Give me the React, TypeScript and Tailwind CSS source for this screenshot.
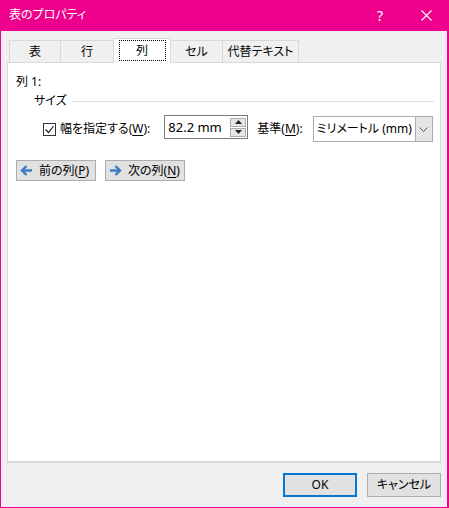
import React from "react";

const font = "font-['Noto_Sans','Noto_Sans_CJK_JP',sans-serif] [font-feature-settings:'palt']";

function Tab({ label, w, selected, last }: { label: string; w: string; selected?: boolean; last?: boolean }) {
  if (selected) {
    return (
      <div className={`${w} h-[25px] -mb-px relative z-10 bg-white border border-b-0 border-[#d9d9d9] flex items-start justify-center pt-[1px]`}>
        <div className="w-[47px] h-[21px] border border-dotted border-black flex items-center justify-center text-[12px] text-black">
          {label}
        </div>
      </div>
    );
  }
  return (
    <div
      className={`${w} h-[22px] border-t border-[#d9d9d9] ${last ? "border-l border-r" : "border-l"} flex items-center justify-center text-[12px] text-black`}
    >
      {label}
    </div>
  );
}

function U({ children }: { children: React.ReactNode }) {
  return <span className="underline underline-offset-2">{children}</span>;
}

function Arrow({ dir }: { dir: "left" | "right" }) {
  return (
    <svg width="13" height="11" viewBox="0 0 13 11" className={dir === "right" ? "" : "-scale-x-100"}>
      <path d="M1 5.5h10M6.5 1l4.5 4.5-4.5 4.5" stroke="#3b7cc4" strokeWidth="2.4" fill="none" />
    </svg>
  );
}

export default function App() {
  return (
    <div className={`w-[449px] h-[508px] bg-[#ec008c] pl-px pr-[2px] pb-px flex flex-col ${font}`}>
      {/* title bar */}
      <div className="h-[31px] flex items-center text-white text-[12px] shrink-0">
        <span className="ml-[8px] mt-[-1px]">表のプロパティ</span>
        <span className="ml-auto mr-[38px] text-[14px]">?</span>
        <svg width="11" height="11" viewBox="0 0 11 11" className="mr-[15px]">
          <path d="M0.5 0.5l10 10M10.5 0.5l-10 10" stroke="white" strokeWidth="1.1" />
        </svg>
      </div>

      {/* body */}
      <div className="flex-1 bg-[#f0f0f0] px-[6px] flex flex-col">
        <div className="mt-[8px] ml-[2px] h-[23px] flex items-end">
          <Tab label="表" w="w-[51px]" />
          <Tab label="行" w="w-[53px]" />
          <Tab label="列" w="w-[58px]" selected />
          <div className="w-[51px] h-[22px] border-t border-[#d9d9d9] flex items-center justify-center text-[12px]">セル</div>
          <Tab label="代替テキスト" w="w-[77px]" last />
        </div>

        <div className="h-[401px] bg-white border border-[#d9d9d9] border-b-2 pl-[8px] pr-[6px] pt-[11px] text-[12px] text-black">
          <div className="h-[16px] leading-[16px]">列 1:</div>

          <div className="mt-[3px] h-[16px] flex items-center pl-[18px]">
            <span className="leading-[16px]">サイズ</span>
            <div className="flex-1 ml-[5px] border-t border-[#dcdcdc]" />
          </div>

          <div className="mt-[6px] flex items-start">
            <div className="ml-[27px] mt-[8px] w-[13px] h-[13px] border border-[#333] flex items-center justify-center">
              <svg width="11" height="11" viewBox="0 0 11 11">
                <path d="M1.5 5.5l3 3 5-6.5" stroke="#222" strokeWidth="1.2" fill="none" />
              </svg>
            </div>
            <span className="ml-[4px] mt-[6px] leading-[16px]">
              幅を指定する(<U>W</U>):
            </span>
            <div className="ml-[14px] w-[84px] h-[24px] border border-[#7a7a7a] bg-white flex items-center">
              <span className="ml-[3px] leading-[16px] text-[13px]">82.2 mm</span>
              <div className="ml-auto mr-[1px] w-[16px] flex flex-col gap-px">
                <div className="h-[9px] border border-[#adadad] bg-[#e5e5e5] flex items-center justify-center">
                  <svg width="7" height="4" viewBox="0 0 7 4"><path d="M0 4h7L3.5 0z" fill="#222" /></svg>
                </div>
                <div className="h-[9px] border border-[#adadad] bg-[#e5e5e5] flex items-center justify-center">
                  <svg width="7" height="4" viewBox="0 0 7 4"><path d="M0 0h7L3.5 4z" fill="#222" /></svg>
                </div>
              </div>
            </div>
            <span className="ml-[9px] mt-[6px] leading-[16px]">
              基準(<U>M</U>):
            </span>
            <div className="ml-[10px] mt-[1px] w-[120px] h-[26px] border border-[#adadad] bg-white flex items-stretch">
              <span className="ml-[3px] self-center leading-[16px]">ミリメートル (mm)</span>
              <div className="ml-auto w-[17px] bg-[#e5e5e5] border-l border-[#adadad] flex items-center justify-center">
                <svg width="9" height="5" viewBox="0 0 9 5"><path d="M0.5 0.5l4 4 4-4" stroke="#555" fill="none" /></svg>
              </div>
            </div>
          </div>

          <div className="mt-[18px] flex gap-[9px]">
            <div className="w-[80px] h-[21px] bg-[#e1e1e1] border border-[#adadad] flex items-center pl-[3px] gap-[6px]">
              <Arrow dir="left" />
              <span className="leading-[16px]">
                前の列(<U>P</U>)
              </span>
            </div>
            <div className="w-[80px] h-[21px] bg-[#e1e1e1] border border-[#adadad] flex items-center pl-[3px] gap-[6px]">
              <Arrow dir="right" />
              <span className="leading-[16px]">
                次の列(<U>N</U>)
              </span>
            </div>
          </div>
        </div>

        <div className="mt-[10px] flex justify-end gap-[10px] text-[12px] text-black">
          <div className="w-[74px] h-[24px] bg-[#e1e1e1] border-2 border-[#0078d7] flex items-center justify-center">OK</div>
          <div className="w-[74px] h-[24px] bg-[#e1e1e1] border border-[#adadad] flex items-center justify-center">キャンセル</div>
        </div>
      </div>
    </div>
  );
}
